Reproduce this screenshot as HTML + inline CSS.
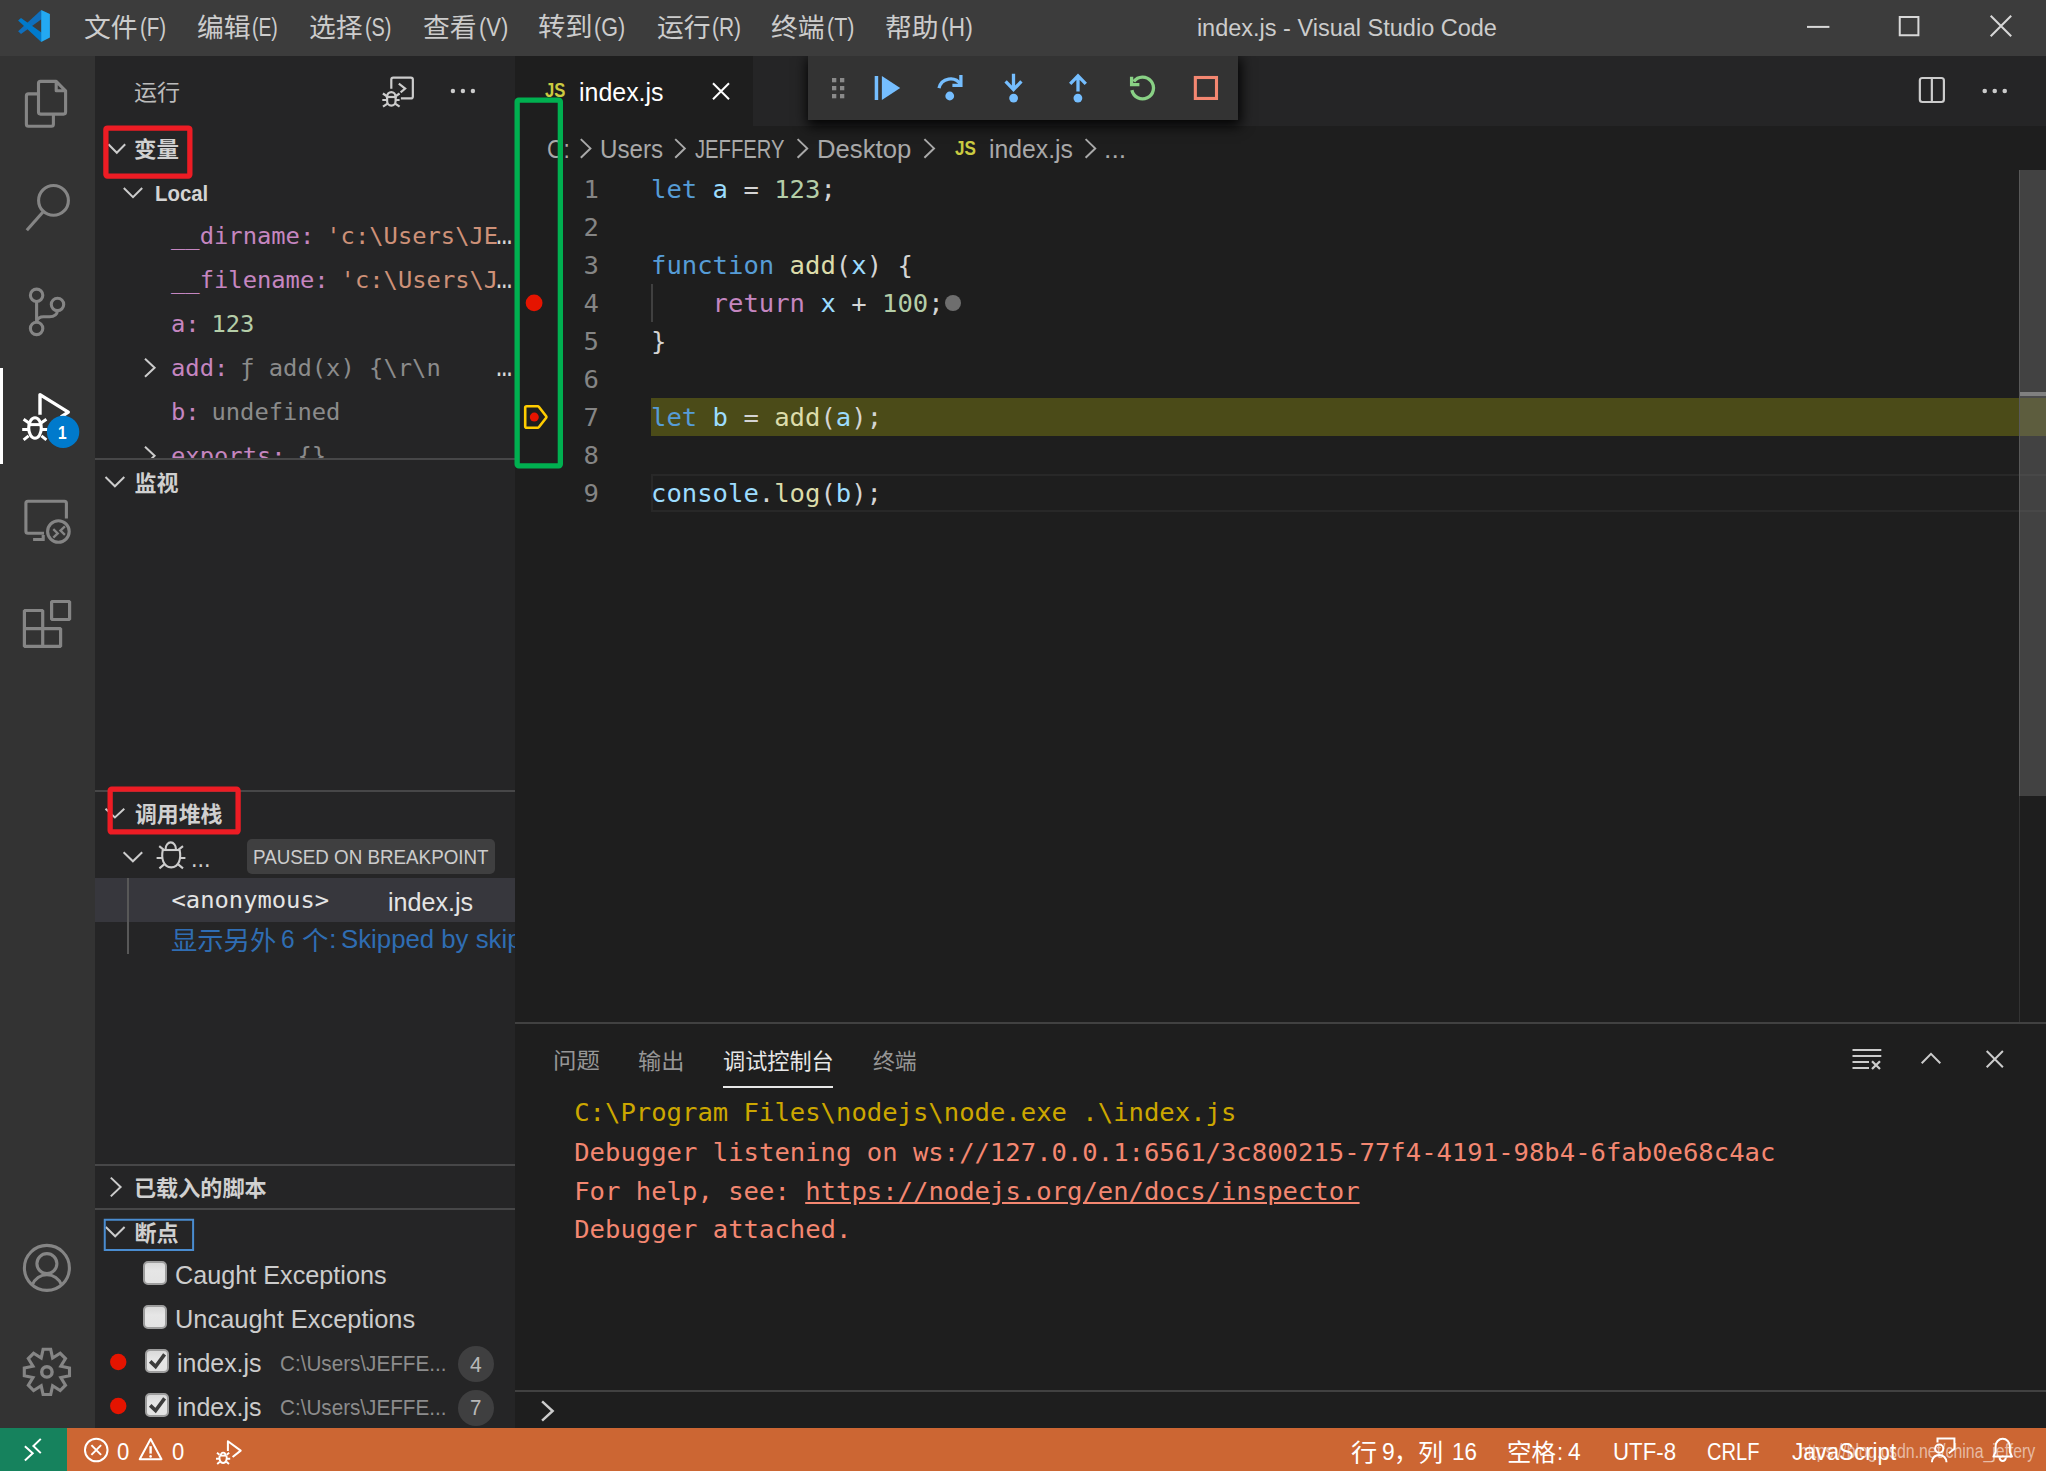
<!DOCTYPE html>
<html lang="zh-CN">
<head>
<meta charset="utf-8">
<title>index.js - Visual Studio Code</title>
<style>
*{box-sizing:border-box;margin:0;padding:0}
html,body{width:2046px;height:1471px;overflow:hidden;background:#1e1e1e}
body{position:relative;font-family:"Liberation Sans","Noto Sans CJK SC",sans-serif;color:#cccccc}
.a{position:absolute}
.t{position:absolute;white-space:pre;line-height:1;transform-origin:0 0;font-family:"Liberation Sans","Noto Sans CJK SC",sans-serif}
.t.m{font-family:"DejaVu Sans Mono","Liberation Mono","Noto Sans CJK SC",monospace}
.clip{position:absolute;overflow:hidden}
svg{position:absolute;left:0;top:0;overflow:visible}
#titlebar{left:0;top:0;width:2046px;height:56px;background:#3c3c3c}
#activity{left:0;top:56px;width:95px;height:1372px;background:#333333}
#sidebar{left:95px;top:56px;width:420px;height:1372px;background:#252526}
#editor{left:515px;top:56px;width:1531px;height:1372px;background:#1e1e1e}
#tabs{left:515px;top:56px;width:1531px;height:69.8px;background:#252526}
#tab{left:515px;top:56px;width:237.5px;height:69.8px;background:#1e1e1e}
#dbgclip{left:770px;top:56px;width:520px;height:110px;overflow:hidden}
#dbgbar{left:38px;top:0;width:430px;height:63.8px;background:#333333;box-shadow:1px 4px 12px 2px rgba(0,0,0,.92)}
#status{left:0;top:1427.5px;width:2046px;height:44px;background:#cc6633}
#remote{left:0;top:1427.5px;width:67px;height:44px;background:#16825d}
.hl{position:absolute;left:95px;width:420px;height:2px;background:#474748}
.cb{width:24px;height:24px;border-radius:5px;border:2px solid #9d9d9d;background:linear-gradient(#d9d9d9,#e6e6e6 40%,#e3e3e3)}
</style>
</head>
<body>
<div id="titlebar" class="a"></div>
<div id="activity" class="a"></div>
<div id="sidebar" class="a"></div>
<div id="editor" class="a"></div>
<div id="tabs" class="a"></div>
<div id="tab" class="a"></div>
<!-- activity active indicator -->
<div class="a" style="left:0;top:368px;width:3px;height:96px;background:#ffffff"></div>
<!-- sidebar separators -->
<div class="hl" style="top:458px"></div>
<div class="hl" style="top:790px"></div>
<div class="hl" style="top:1164px"></div>
<div class="hl" style="top:1208px"></div>
<!-- call stack: badge, selected row, indent guide -->
<div class="a" style="left:247px;top:839px;width:248px;height:35px;background:#3f3f40;border-radius:5px"></div>
<div class="a" style="left:95px;top:878px;width:420px;height:44px;background:#37373d"></div>
<div class="a" style="left:127px;top:878px;width:2px;height:76px;background:#585858"></div>
<!-- breakpoint count badges -->
<div class="a" style="left:457.5px;top:1346px;width:36px;height:36px;border-radius:50%;background:#3f3f40"></div>
<div class="a" style="left:457.5px;top:1389.7px;width:36px;height:36px;border-radius:50%;background:#3f3f40"></div>
<!-- breakpoint checkboxes -->
<div class="a cb" style="left:143.2px;top:1261px"></div>
<div class="a cb" style="left:143.2px;top:1305px"></div>
<div class="a cb" style="left:145px;top:1349px"></div>
<div class="a cb" style="left:145px;top:1393px"></div>
<!-- editor decorations -->
<div class="a" style="left:651px;top:398px;width:1395px;height:38px;background:#4b4b18"></div>
<div class="a" style="left:651px;top:474px;width:1395px;height:38px;border:2px solid #282828;border-right:0"></div>
<div class="a" style="left:651px;top:284px;width:2px;height:38px;background:#404040"></div>
<div class="a" style="left:944.5px;top:295px;width:16px;height:16px;border-radius:50%;background:#6e6e6e"></div>
<!-- scrollbar / overview ruler -->
<div class="a" style="left:2019px;top:170px;width:1px;height:852px;background:#333333"></div>
<div class="a" style="left:2020px;top:392px;width:26px;height:4px;background:#858585"></div>
<div class="a" style="left:2020px;top:396px;width:26px;height:2px;background:#2d2d2d"></div>
<div class="a" style="left:2019px;top:170px;width:27px;height:626px;background:rgba(121,121,121,.4);border-left:1px solid rgba(150,150,150,.14)"></div>
<!-- debug toolbar -->
<div id="dbgclip" class="a"><div id="dbgbar" class="a"></div></div>
<!-- panel -->
<div class="a" style="left:515px;top:1022px;width:1531px;height:2px;background:#414141"></div>
<div class="a" style="left:723px;top:1085.5px;width:110px;height:2.5px;background:#e7e7e7"></div>
<div class="a" style="left:515px;top:1390px;width:1531px;height:2px;background:#414141"></div>
<!-- status bar -->
<div id="status" class="a"></div>
<div id="remote" class="a"></div>
<svg id="icons" width="2046" height="1471" viewBox="0 0 2046 1471" fill="none" stroke-linecap="butt" stroke-linejoin="miter">
<!-- VS Code logo -->
<g stroke="none">
<polygon points="41.2,9.9 41.75,19.1 21,33.9 18.1,31.3" fill="#0f6fbd"/>
<polygon points="21,17.9 41.75,32.8 41.2,41.9 18.1,20.6" fill="#007acc"/>
<polygon points="41.2,9.9 49.9,14.1 49.9,37.55 41.2,41.9" fill="#23a9f2"/>
</g>
<!-- window controls -->
<g stroke="#d8d8d8" stroke-width="2">
<path d="M1807,26.9H1829.4"/>
<rect x="1899.75" y="17" width="18.65" height="18.25"/>
<path d="M1990.7,15.7L2011.2,36.2M2011.2,15.7L1990.7,36.2"/>
</g>
<!-- activity bar -->
<g stroke="#858585" stroke-width="3.1" stroke-linejoin="round">
<path d="M56.2,81.4H40.5Q38.5,81.4 38.5,83.4V112.1Q38.5,114.1 40.5,114.1H63.6Q65.6,114.1 65.6,112.1V90.8L56.2,81.4V90.8H65.6"/>
<path d="M38.5,93.9H28.4Q26.4,93.9 26.4,95.9V124.25Q26.4,126.25 28.4,126.25H51.4Q53.4,126.25 53.4,124.25V114.1"/>
<circle cx="53.5" cy="200.4" r="14.9"/>
<path d="M43.2,211.7L26.8,230.2" stroke-linecap="butt"/>
<circle cx="36.6" cy="295.3" r="6.2"/><circle cx="57.5" cy="304.4" r="6.2"/><circle cx="36.6" cy="328.4" r="6.2"/>
<path d="M36.6,301.5V322.2M57.5,310.6Q56.8,316.7 49.5,316.7H43.5Q38,316.7 36.7,321.5"/>
<path d="M66.4,518.6V503.3Q66.4,501.3 64.4,501.3H27.9Q25.9,501.3 25.9,503.3V531.2Q25.9,533.2 27.9,533.2H44"/>
<path d="M43.2,535V539.5M33.1,539.5H44.7"/>
<circle cx="58.4" cy="531.5" r="10.8"/>
<path d="M53.3,529.2L57.7,533.4L53.3,537.6M64.9,526.4L60.5,530.6L64.9,534.8" stroke-width="2.3" stroke-linejoin="miter"/>
<path d="M24.4,610.5H42.7V628.6H60.6V646.4H24.4ZM24.4,628.6H42.7V646.4" stroke-width="3.2" stroke-linejoin="bevel"/>
<rect x="51.6" y="601.5" width="18" height="18" stroke-width="3.2" stroke-linejoin="bevel"/>
<circle cx="46.9" cy="1267.9" r="22.5"/>
<circle cx="46.9" cy="1263.6" r="10"/>
<path d="M32.4,1284.8A15.5,15.5 0 0 1 61.4,1284.8"/>
<polygon points="43.1,1349.3 50.7,1349.3 52.6,1358.0 60.2,1353.3 65.5,1358.6 60.8,1366.2 69.5,1368.1 69.5,1375.7 60.8,1377.6 65.5,1385.2 60.2,1390.5 52.6,1385.8 50.7,1394.5 43.1,1394.5 41.2,1385.8 33.6,1390.5 28.3,1385.2 33.0,1377.6 24.3,1375.7 24.3,1368.1 33.0,1366.2 28.3,1358.6 33.6,1353.3 41.2,1358.0" stroke-linejoin="miter"/>
<circle cx="46.9" cy="1371.9" r="5.2" stroke-width="3.4"/>
</g>
<!-- active debug icon -->
<g stroke="#ffffff" stroke-width="3.4">
<path d="M40,414.8V394.6L68.3,412.1L61,416.9" stroke-linejoin="round"/>
<path d="M29,424.6H41" stroke-width="3"/>
<ellipse cx="35" cy="428" rx="6.3" ry="10.2" stroke-width="3.1"/>
<path d="M28.6,422.8L23.6,419.2M41.4,422.8L46.4,419.2M22.2,429.6H29M41,429.6H47.6M28.6,435.8L23.6,439.8M41.4,435.8L46.4,439.8" stroke-width="3"/>
</g>
<circle cx="63.1" cy="431.9" r="16.2" fill="#007acc"/>
<!-- sidebar header icons -->
<g stroke="#cccccc" stroke-width="2.2" stroke-linejoin="round">
<path d="M391.3,88.8V79.6Q391.3,77.6 393.3,77.6H410.85Q412.85,77.6 412.85,79.6V96.4Q412.85,98.4 410.85,98.4H400.9"/>
<path d="M398.8,83.6L405.2,88.6L400.6,92.4" stroke-width="2.1" stroke-linejoin="miter"/>
<g stroke-width="2.2">
<path d="M387.2,96.4A4.1,4.3 0 0 1 395.4,96.4"/>
<path d="M385.8,97H396.8"/>
<path d="M387.1,97V101A4.25,4.7 0 0 0 395.6,101V97"/>
<path d="M386.6,96L382.9,93.5M395.9,96L399.6,93.5M382.3,100H386.6M396,100H399.6M387.5,103.6L383,106.7M395.1,103.6L399.6,106.7"/>
</g>
</g>
<g fill="#cccccc" stroke="none">
<circle cx="452.9" cy="91" r="2.2"/><circle cx="462.9" cy="91" r="2.2"/><circle cx="472.9" cy="91" r="2.2"/>
<circle cx="1984.75" cy="91" r="2.3"/><circle cx="1994.75" cy="91" r="2.3"/><circle cx="2004.75" cy="91" r="2.3"/>
</g>
<!-- tree chevrons -->
<g stroke="#cccccc" stroke-width="2">
<path d="M108.4,144.2L116.8,152.8L125.2,144.2"/>
<path d="M123.8,188.0L133.0,197.2L142.2,188.0"/>
<path d="M105.5,477.0L114.9,486.3L124.3,477.0"/>
<path d="M105.5,808.8L114.9,817.4L124.3,808.8"/>
<path d="M123.6,852.3L132.9,861.3L142.2,852.3"/>
<path d="M105.8,1227.0L115.2,1236.3L124.6,1227.0"/>
<path d="M145.0,358.8L154.6,367.8L145.0,376.8"/>
<path d="M110.8,1177.6L120.6,1187.0L110.8,1196.4"/>
</g>
<!-- call stack session bug -->
<g stroke="#cccccc" stroke-width="2.1">
<path d="M165.6,849A5.15,6.6 0 0 1 175.9,849"/>
<path d="M161.9,850H180.2"/>
<path d="M162.8,850C161,858 163.2,867.4 171.2,867.4C179.2,867.4 181.4,858 179.6,850"/>
<path d="M163.6,849.6L159.2,846.1M178.6,849.6L183,846.1M156.6,858H162.2M180.2,858H185.4M164.2,864.4L159.4,868.4M178.2,864.4L183,868.4"/>
</g>
<!-- breakpoints -->
<g stroke="none" fill="#e51400">
<circle cx="118.25" cy="1362" r="8.2"/><circle cx="118.25" cy="1406" r="8.2"/>
<circle cx="534.1" cy="302.9" r="8.4"/>
<circle cx="534.3" cy="417.1" r="4.5"/>
</g>
<path d="M526.7,406.2H537.6Q538.4,406.2 539,407L546.2,416.2Q546.8,417 546.2,417.8L539,427Q538.4,427.8 537.6,427.8H526.7Q525.2,427.8 525.2,426.3V407.7Q525.2,406.2 526.7,406.2Z" stroke="#ffcc00" stroke-width="2.6" stroke-linejoin="round"/>
<g stroke="#3c3c3c" stroke-width="3.6" stroke-linejoin="miter">
<path d="M150.2,1361.4L155.6,1366.6L164.6,1354.4"/>
<path d="M150.2,1405.4L155.6,1410.6L164.6,1398.4"/>
</g>
<rect x="104.75" y="1219.75" width="88.35" height="30.25" stroke="#4a8cd0" stroke-width="2"/>
<!-- tab close, split editor -->
<g stroke="#ffffff" stroke-width="2"><path d="M713,83.2L729,99.2M729,83.2L713,99.2"/></g>
<g stroke="#cccccc" stroke-width="2.2">
<rect x="1919.85" y="78" width="24.05" height="24" rx="2.5"/><path d="M1931.85,78V102"/>
</g>
<!-- breadcrumb separators -->
<g stroke="#a9a9a9" stroke-width="2">
<path d="M580.8,139.1L590.4,148.4L580.8,157.7"/>
<path d="M675.2,139.1L684.8,148.4L675.2,157.7"/>
<path d="M797.6,139.1L807.2,148.4L797.6,157.7"/>
<path d="M924.4,139.1L934.0,148.4L924.4,157.7"/>
<path d="M1085.6,139.1L1095.2,148.4L1085.6,157.7"/>
</g>
<!-- debug toolbar -->
<g fill="#8a8a8a" stroke="none">
<rect x="832" y="78" width="4.3" height="4.3"/><rect x="840" y="78" width="4.3" height="4.3"/>
<rect x="832" y="86" width="4.3" height="4.3"/><rect x="840" y="86" width="4.3" height="4.3"/>
<rect x="832" y="94" width="4.3" height="4.3"/><rect x="840" y="94" width="4.3" height="4.3"/>
</g>
<g fill="#75beff" stroke="none">
<rect x="874.7" y="76" width="3.5" height="24"/>
<polygon points="881.9,76 900.2,88 881.9,100"/>
<circle cx="949.75" cy="96" r="4.4"/>
<circle cx="1013.6" cy="98.1" r="4.4"/>
<circle cx="1077.9" cy="98.1" r="4.4"/>
</g>
<g stroke="#75beff" stroke-width="3.3">
<path d="M939,88.2A11.8,11.8 0 0 1 960.6,84.5"/>
<path d="M960.9,75V85.3H952.4"/>
<path d="M1013.5,73.8V90M1005.6,81.4L1013.5,89.6L1021.4,81.4"/>
<path d="M1078,91.4V75.6M1070.2,83.8L1078,75.8L1085.8,83.8"/>
</g>
<g stroke="#89d185" stroke-width="3.3">
<path d="M1133.8,81.5A10.9,10.9 0 1 1 1131.9,90.2"/>
<path d="M1131.6,76.8V84.7H1139.4"/>
</g>
<rect x="1195.35" y="77.5" width="21.15" height="20.95" stroke="#f48771" stroke-width="3.1"/>
<!-- panel actions -->
<g stroke="#cccccc" stroke-width="2">
<path d="M1852.5,1050H1881.3M1852.5,1055.9H1881.3M1852.5,1062H1869M1852.5,1068H1869"/>
<path d="M1872,1061.2L1880,1069M1880,1061.2L1872,1069" stroke-width="2.3"/>
<path d="M1921.7,1063.2L1931,1053.9L1940.3,1063.2"/>
<path d="M1986.7,1051L2002.9,1067.2M2002.9,1051L1986.7,1067.2"/>
<path d="M542.1,1401.4L552.6,1411L542.1,1420.6" stroke-width="2.5"/>
</g>
<!-- status bar -->
<g stroke="#ffffff" stroke-width="2">
<path d="M24.9,1446.2L32.7,1453.3L24.9,1460.4M40.8,1438.9L33.4,1446L40.8,1453.1"/>
<circle cx="96.25" cy="1450" r="11.3"/>
<path d="M91.4,1445.1L101.1,1454.9M101.1,1445.1L91.4,1454.9"/>
<path d="M150.6,1439L161.5,1459.3H139.7Z" stroke-linejoin="round"/>
<path d="M150.6,1446.2V1453.6" stroke-width="2.4"/>
<path d="M227.9,1451V1441.2L240.7,1450.6L232.6,1457" stroke-linejoin="round"/>
<g stroke-width="1.9">
<path d="M219.7,1455.6H226.5"/>
<path d="M219.7,1455.6C218.9,1459 220,1463 223.1,1463C226.2,1463 227.3,1459 226.5,1455.6"/>
<path d="M220.7,1455.6A2.4,3 0 0 1 225.5,1455.6"/>
<path d="M219.5,1454.8L217,1452.8M226.7,1454.8L229.2,1452.8M216,1458.8H219.4M226.8,1458.8H230.2M219.8,1461.8L217.2,1464M226.4,1461.8L229,1464"/>
</g>
<path d="M1937.5,1442.6V1438.4H1954.4V1448.8L1948.8,1453.2"/>
<circle cx="1939.25" cy="1448.6" r="4.1"/>
<path d="M1931.9,1462.2A7.3,7.3 0 0 1 1946.5,1462.2"/>
<path d="M1993.4,1456.6H2012L2009.8,1451.8V1446.2A7.1,7.4 0 0 0 1995.6,1446.2V1451.8Z" stroke-linejoin="round"/>
<path d="M1999.6,1457.6A3.1,3.4 0 0 0 2005.8,1457.6"/>
</g>
<circle cx="150.6" cy="1456.4" r="1.3" fill="#ffffff"/>
</svg>
<div id="titletext">
<span class="t" style="left:84.07px;top:14.70px;font-size:26px;color:#cccccc;transform:scaleX(1.0300);">文件</span>
<span class="t" style="left:139.80px;top:15.20px;font-size:25.5px;color:#cccccc;transform:scaleX(0.8033);">(F)</span>
<span class="t" style="left:196.67px;top:14.70px;font-size:26px;color:#cccccc;transform:scaleX(1.0300);">编辑</span>
<span class="t" style="left:252.44px;top:15.20px;font-size:25.5px;color:#cccccc;transform:scaleX(0.7594);">(E)</span>
<span class="t" style="left:309.47px;top:14.70px;font-size:26px;color:#cccccc;transform:scaleX(1.0300);">选择</span>
<span class="t" style="left:365.22px;top:15.20px;font-size:25.5px;color:#cccccc;transform:scaleX(0.7781);">(S)</span>
<span class="t" style="left:422.87px;top:14.70px;font-size:26px;color:#cccccc;transform:scaleX(1.0300);">查看</span>
<span class="t" style="left:478.54px;top:15.20px;font-size:25.5px;color:#cccccc;transform:scaleX(0.8625);">(V)</span>
<span class="t" style="left:538.35px;top:14.20px;font-size:26px;color:#cccccc;transform:scaleX(1.0510);">转到</span>
<span class="t" style="left:594.05px;top:15.20px;font-size:25.5px;color:#cccccc;transform:scaleX(0.8457);">(G)</span>
<span class="t" style="left:656.57px;top:14.70px;font-size:26px;color:#cccccc;transform:scaleX(1.0300);">运行</span>
<span class="t" style="left:712.28px;top:15.20px;font-size:25.5px;color:#cccccc;transform:scaleX(0.8212);">(R)</span>
<span class="t" style="left:771.37px;top:14.70px;font-size:26px;color:#cccccc;transform:scaleX(1.0300);">终端</span>
<span class="t" style="left:827.06px;top:15.20px;font-size:25.5px;color:#cccccc;transform:scaleX(0.8433);">(T)</span>
<span class="t" style="left:885.27px;top:14.70px;font-size:26px;color:#cccccc;transform:scaleX(1.0300);">帮助</span>
<span class="t" style="left:940.90px;top:15.20px;font-size:25.5px;color:#cccccc;transform:scaleX(0.8970);">(H)</span>
<span class="t" style="left:1196.90px;top:16.70px;font-size:23.5px;color:#cccccc;">index.js - Visual Studio Code</span>
</div>
<div id="acttext">
<span class="t" style="left:58.44px;top:423.75px;font-size:18px;color:#ffffff;font-weight:700;transform:scaleX(0.8600);">1</span>
</div>
<div id="varsclip" class="clip" style="left:0;top:0;width:515px;height:458px">
<span class="t" style="left:133.70px;top:82.25px;font-size:22px;color:#bbbbbb;transform:scaleX(1.0476);">运行</span>
<span class="t" style="left:133.73px;top:139.40px;font-size:22px;color:#d0d0d0;font-weight:700;transform:scaleX(1.0233);">变量</span>
<span class="t" style="left:154.69px;top:183.00px;font-size:22.5px;color:#d4d4d4;font-weight:700;transform:scaleX(0.9061);">Local</span>
<span class="t m" style="left:171.00px;top:224.75px;font-size:23.8px;color:#c586c0;">__dirname:</span>
<span class="t m" style="left:326.25px;top:224.75px;font-size:23.8px;color:#ce9178;">'c:\Users\JE</span>
<span class="t m" style="left:171.00px;top:268.75px;font-size:23.8px;color:#c586c0;">__filename:</span>
<span class="t m" style="left:340.60px;top:268.75px;font-size:23.8px;color:#ce9178;">'c:\Users\J</span>
<span class="t m" style="left:171.00px;top:312.50px;font-size:23.8px;color:#c586c0;">a:</span>
<span class="t m" style="left:211.45px;top:312.50px;font-size:23.8px;color:#b5cea8;">123</span>
<span class="t m" style="left:171.00px;top:356.60px;font-size:23.8px;color:#c586c0;">add:</span>
<span class="t m" style="left:240.15px;top:356.60px;font-size:23.8px;color:#8b8b8b;">ƒ add(x) {\r\n</span>
<span class="t m" style="left:171.00px;top:400.75px;font-size:23.8px;color:#c586c0;">b:</span>
<span class="t m" style="left:211.45px;top:400.75px;font-size:23.8px;color:#8b8b8b;">undefined</span>
<span class="t m" style="left:171.00px;top:444.75px;font-size:23.8px;color:#c586c0;">exports:</span>
<span class="t m" style="left:297.55px;top:444.75px;font-size:23.8px;color:#8b8b8b;">{}</span>
<span class="t" style="left:496.12px;top:224.25px;font-size:24px;color:#d8d8d8;font-weight:700;transform:scaleX(0.6875);">…</span>
<span class="t" style="left:496.12px;top:268.25px;font-size:24px;color:#d8d8d8;font-weight:700;transform:scaleX(0.6875);">…</span>
<span class="t" style="left:496.12px;top:356.10px;font-size:24px;color:#d8d8d8;font-weight:700;transform:scaleX(0.6875);">…</span>
<svg width="515" height="458" viewBox="0 0 515 458" fill="none" stroke="#cccccc" stroke-width="2"><path d="M145.0,446.8L154.6,455.8L145.0,464.8"/></svg>
</div>
<div id="sideclip" class="clip" style="left:0;top:0;width:515px;height:1427px">
<span class="t" style="left:134.40px;top:472.50px;font-size:22px;color:#d0d0d0;font-weight:700;">监视</span>
<span class="t" style="left:135.40px;top:804.40px;font-size:22px;color:#d0d0d0;font-weight:700;transform:scaleX(0.9943);">调用堆栈</span>
<span class="t" style="left:190.76px;top:846.00px;font-size:25.5px;color:#cccccc;transform:scaleX(0.9176);">...</span>
<span class="t" style="left:252.86px;top:846.20px;font-size:21px;color:#cccccc;transform:scaleX(0.8945);">PAUSED ON BREAKPOINT</span>
<span class="t m" style="left:171.50px;top:888.75px;font-size:23.8px;color:#e4e4e4;">&lt;anonymous&gt;</span>
<span class="t" style="left:388.42px;top:889.50px;font-size:25.5px;color:#e4e4e4;transform:scaleX(0.9847);">index.js</span>
<span class="t" style="left:170.59px;top:927.50px;font-size:26px;color:#2f6db3;transform:scaleX(1.0113);">显示另外</span>
<span class="t" style="left:281.29px;top:926.50px;font-size:25.5px;color:#2f6db3;transform:scaleX(0.9615);">6</span>
<span class="t" style="left:302.48px;top:927.50px;font-size:26px;color:#2f6db3;transform:scaleX(1.0208);">个</span>
<span class="t" style="left:329.07px;top:926.50px;font-size:25.5px;color:#2f6db3;transform:scaleX(1.0667);">:</span>
<span class="t" style="left:341.49px;top:926.50px;font-size:25.5px;color:#2f6db3;transform:scaleX(1.0105);">Skipped by skipFiles</span>
<span class="t" style="left:133.99px;top:1178.00px;font-size:22px;color:#d0d0d0;font-weight:700;transform:scaleX(1.0046);">已载入的脚本</span>
<span class="t" style="left:134.40px;top:1222.70px;font-size:22px;color:#d0d0d0;font-weight:700;">断点</span>
<span class="t" style="left:174.76px;top:1262.75px;font-size:25.5px;color:#cccccc;transform:scaleX(0.9883);">Caught Exceptions</span>
<span class="t" style="left:174.61px;top:1306.50px;font-size:25.5px;color:#cccccc;transform:scaleX(0.9964);">Uncaught Exceptions</span>
<span class="t" style="left:176.92px;top:1351.00px;font-size:25.5px;color:#cccccc;transform:scaleX(0.9776);">index.js</span>
<span class="t" style="left:280.09px;top:1352.00px;font-size:22.8px;color:#8c8c8c;transform:scaleX(0.9061);">C:\Users\JEFFE...</span>
<span class="t" style="left:470.00px;top:1353.50px;font-size:22px;color:#b8b8b8;transform:scaleX(0.9583);">4</span>
<span class="t" style="left:176.92px;top:1395.00px;font-size:25.5px;color:#cccccc;transform:scaleX(0.9776);">index.js</span>
<span class="t" style="left:280.09px;top:1396.00px;font-size:22.8px;color:#8c8c8c;transform:scaleX(0.9061);">C:\Users\JEFFE...</span>
<span class="t" style="left:469.66px;top:1397.25px;font-size:22px;color:#b8b8b8;transform:scaleX(0.9364);">7</span>
</div>
<div id="edtext">
<span class="t" style="left:545.00px;top:80.25px;font-size:20px;color:#cbcb41;font-weight:700;transform:scaleX(0.8333);">JS</span>
<span class="t" style="left:579.02px;top:79.75px;font-size:25.5px;color:#ffffff;transform:scaleX(0.9776);">index.js</span>
<span class="t" style="left:546.60px;top:136.50px;font-size:25.5px;color:#a9a9a9;transform:scaleX(0.8957);">C:</span>
<span class="t" style="left:600.01px;top:136.50px;font-size:25.5px;color:#a9a9a9;transform:scaleX(0.9469);">Users</span>
<span class="t" style="left:695.00px;top:136.50px;font-size:25.5px;color:#a9a9a9;transform:scaleX(0.7924);">JEFFERY</span>
<span class="t" style="left:817.48px;top:136.50px;font-size:25.5px;color:#a9a9a9;transform:scaleX(1.0082);">Desktop</span>
<span class="t" style="left:954.50px;top:138.00px;font-size:20px;color:#cbcb41;font-weight:700;transform:scaleX(0.8542);">JS</span>
<span class="t" style="left:989.03px;top:136.50px;font-size:25.5px;color:#a9a9a9;transform:scaleX(0.9706);">index.js</span>
<span class="t" style="left:1103.91px;top:136.50px;font-size:25.5px;color:#a9a9a9;transform:scaleX(1.0441);">...</span>
<span class="t m" style="left:583.50px;top:177.00px;font-size:25.58px;color:#858585;">1</span>
<span class="t m" style="left:583.50px;top:215.00px;font-size:25.58px;color:#858585;">2</span>
<span class="t m" style="left:583.50px;top:253.00px;font-size:25.58px;color:#858585;">3</span>
<span class="t m" style="left:583.50px;top:291.00px;font-size:25.58px;color:#858585;">4</span>
<span class="t m" style="left:583.50px;top:329.00px;font-size:25.58px;color:#858585;">5</span>
<span class="t m" style="left:583.50px;top:367.00px;font-size:25.58px;color:#858585;">6</span>
<span class="t m" style="left:583.50px;top:405.00px;font-size:25.58px;color:#858585;">7</span>
<span class="t m" style="left:583.50px;top:443.00px;font-size:25.58px;color:#858585;">8</span>
<span class="t m" style="left:583.50px;top:481.00px;font-size:25.58px;color:#858585;">9</span>
<span class="t m" style="left:651.00px;top:177.00px;font-size:25.58px;color:#d4d4d4;"><span style="color:#569cd6">let</span> <span style="color:#9cdcfe">a</span> = <span style="color:#b5cea8">123</span>;</span>
<span class="t m" style="left:651.00px;top:253.00px;font-size:25.58px;color:#d4d4d4;"><span style="color:#569cd6">function</span> <span style="color:#dcdcaa">add</span>(<span style="color:#9cdcfe">x</span>) {</span>
<span class="t m" style="left:651.00px;top:291.00px;font-size:25.58px;color:#d4d4d4;">    <span style="color:#c586c0">return</span> <span style="color:#9cdcfe">x</span> + <span style="color:#b5cea8">100</span>;</span>
<span class="t m" style="left:651.00px;top:329.00px;font-size:25.58px;color:#d4d4d4;">}</span>
<span class="t m" style="left:651.00px;top:405.00px;font-size:25.58px;color:#d4d4d4;"><span style="color:#569cd6">let</span> <span style="color:#9cdcfe">b</span> = <span style="color:#dcdcaa">add</span>(<span style="color:#9cdcfe">a</span>);</span>
<span class="t m" style="left:651.00px;top:481.00px;font-size:25.58px;color:#d4d4d4;"><span style="color:#9cdcfe">console</span>.<span style="color:#dcdcaa">log</span>(<span style="color:#9cdcfe">b</span>);</span>
</div>
<div id="paneltext">
<span class="t" style="left:552.87px;top:1050.10px;font-size:22px;color:#969696;transform:scaleX(1.0671);">问题</span>
<span class="t" style="left:637.70px;top:1050.60px;font-size:22px;color:#969696;transform:scaleX(1.0549);">输出</span>
<span class="t" style="left:722.74px;top:1050.60px;font-size:22px;color:#e7e7e7;transform:scaleX(1.0069);">调试控制台</span>
<span class="t" style="left:872.50px;top:1050.60px;font-size:22px;color:#969696;transform:scaleX(0.9943);">终端</span>
<span class="t m" style="left:574.20px;top:1099.50px;font-size:25.58px;color:#cca700;">C:\Program Files\nodejs\node.exe .\index.js</span>
<span class="t m" style="left:574.20px;top:1139.50px;font-size:25.58px;color:#f48771;">Debugger listening on ws://127.0.0.1:6561/3c800215-77f4-4191-98b4-6fab0e68c4ac</span>
<span class="t m" style="left:574.20px;top:1178.50px;font-size:25.58px;color:#f48771;">For help, see: <u>https://nodejs.org/en/docs/inspector</u></span>
<span class="t m" style="left:574.20px;top:1217.00px;font-size:25.58px;color:#f48771;">Debugger attached.</span>
</div>
<div id="statustext">
<span class="t" style="left:117.16px;top:1441.00px;font-size:23.5px;color:#ffffff;transform:scaleX(0.9417);">0</span>
<span class="t" style="left:171.56px;top:1441.00px;font-size:23.5px;color:#ffffff;transform:scaleX(0.9375);">0</span>
<span class="t" style="left:1350.91px;top:1440.70px;font-size:24px;color:#ffffff;transform:scaleX(1.0909);">行</span>
<span class="t" style="left:1382.03px;top:1440.80px;font-size:23.5px;color:#ffffff;transform:scaleX(0.9727);">9</span>
<span class="t" style="left:1394.00px;top:1440.50px;font-size:24px;color:#ffffff;">，</span>
<span class="t" style="left:1417.95px;top:1440.70px;font-size:24px;color:#ffffff;transform:scaleX(1.0455);">列</span>
<span class="t" style="left:1451.65px;top:1440.80px;font-size:23.5px;color:#ffffff;transform:scaleX(0.9542);">16</span>
<span class="t" style="left:1506.98px;top:1440.70px;font-size:24px;color:#ffffff;transform:scaleX(1.0213);">空格</span>
<span class="t" style="left:1556.93px;top:1440.80px;font-size:23.5px;color:#ffffff;transform:scaleX(0.9333);">:</span>
<span class="t" style="left:1567.60px;top:1440.80px;font-size:23.5px;color:#ffffff;transform:scaleX(0.9692);">4</span>
<span class="t" style="left:1612.65px;top:1440.80px;font-size:23.5px;color:#ffffff;transform:scaleX(0.9477);">UTF-8</span>
<span class="t" style="left:1707.44px;top:1440.80px;font-size:23.5px;color:#ffffff;transform:scaleX(0.8550);">CRLF</span>
<span class="t" style="left:1791.80px;top:1440.80px;font-size:23.5px;color:#ffffff;transform:scaleX(0.9491);">JavaScript</span>
<span class="t" style="left:1798.81px;top:1441.00px;font-size:20px;color:rgba(255,255,255,.56);transform:scaleX(0.7939);">https://blog.csdn.net/china_jeffery</span>
</div>
<svg id="overlay" width="2046" height="1471" viewBox="0 0 2046 1471" fill="none">
<rect x="105.9" y="128.05" width="83.95" height="48.05" rx="1.5" stroke="#ed1c24" stroke-width="5.3"/>
<rect x="110.15" y="789.15" width="127.95" height="42.8" rx="1.5" stroke="#ed1c24" stroke-width="5.3"/>
<rect x="517.15" y="100.15" width="43.2" height="365.7" rx="1.5" stroke="#00b050" stroke-width="5.3"/>
</svg>
</body>
</html>
